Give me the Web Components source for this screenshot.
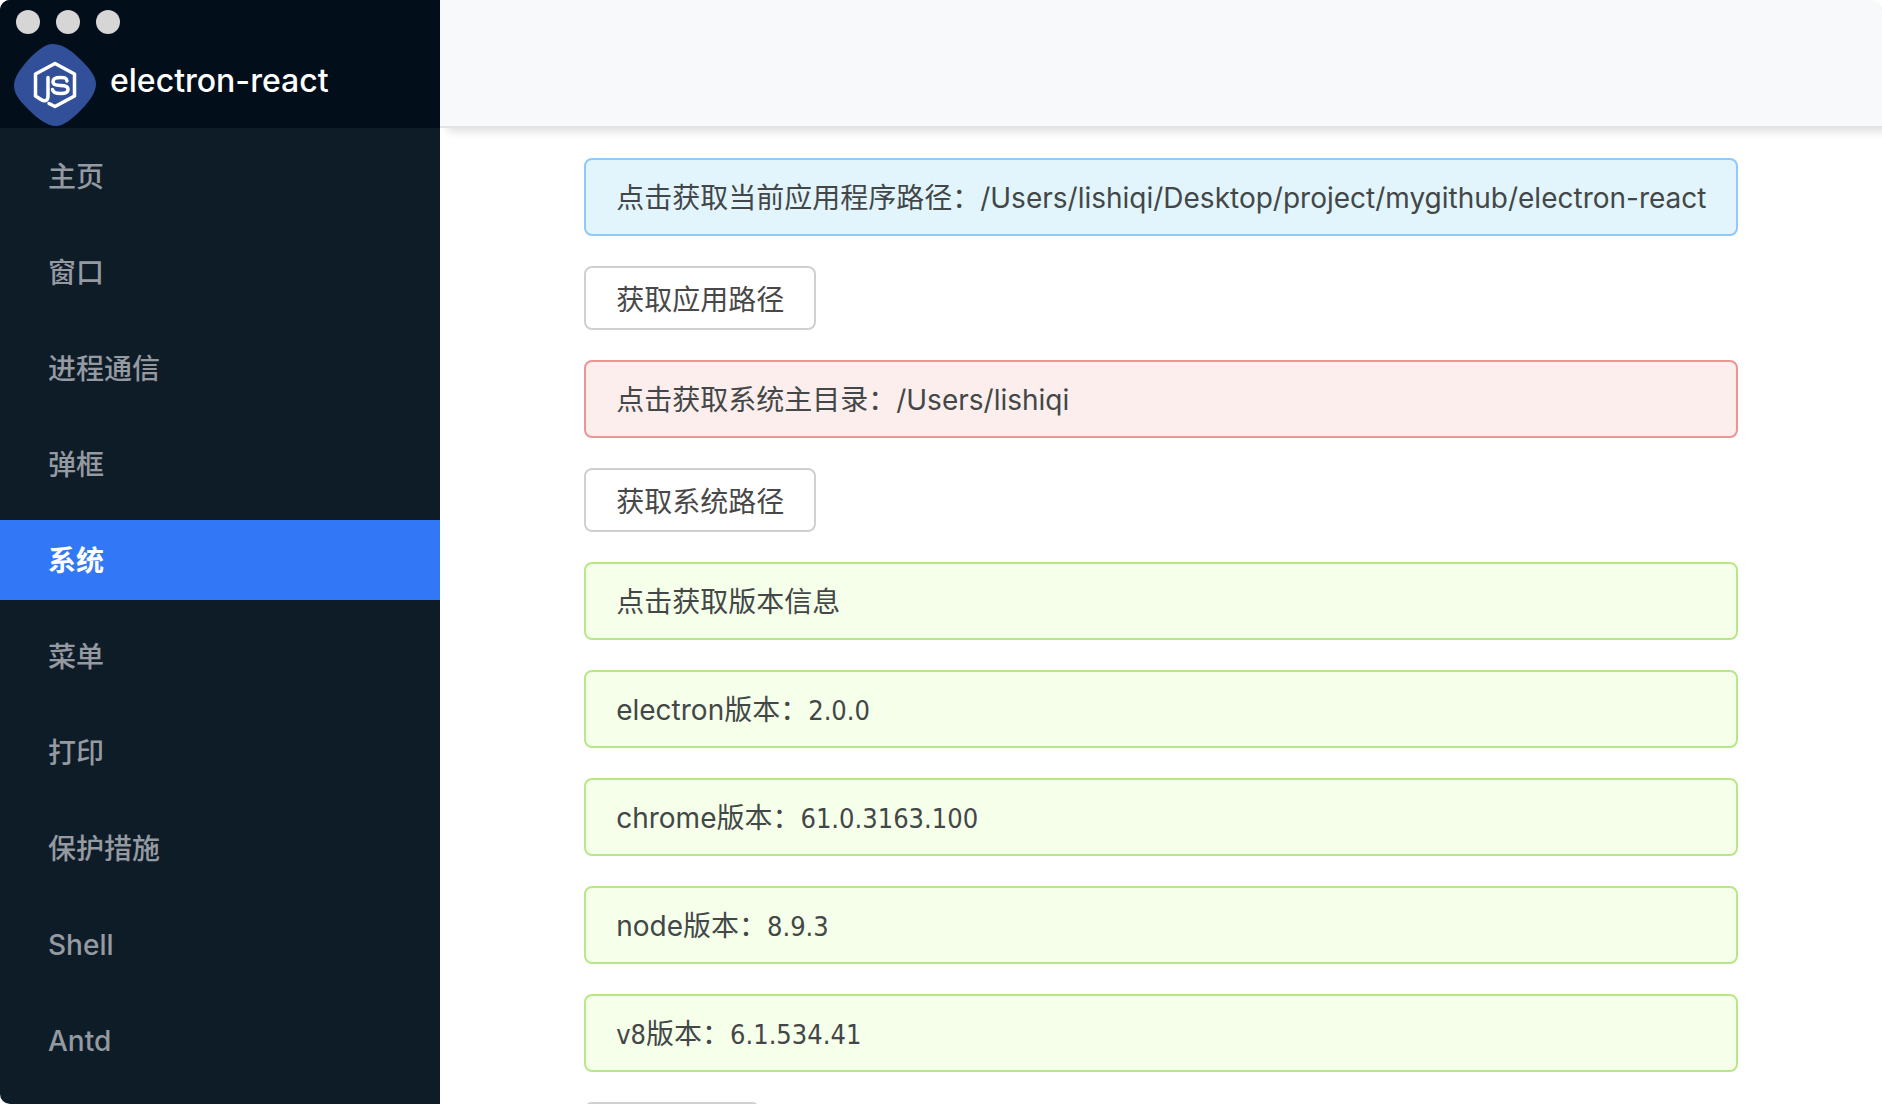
<!DOCTYPE html>
<html lang="zh-CN">
<head>
<meta charset="utf-8">
<title>electron-react</title>
<style>
html, body { height: 100%; margin: 0; }
body {
  background: #fff;
  overflow: hidden;
  font-family: Inter, "Noto Sans CJK SC", sans-serif;
  font-size: 28px;
  line-height: 42px;
  color: #434747;
}
</style>
</head>
<body>
<app-window>
  <app-brand slot="side">electron-react</app-brand>
  <side-menu slot="side">
    <menu-link href="#home">主页</menu-link>
    <menu-link href="#window">窗口</menu-link>
    <menu-link href="#ipc">进程通信</menu-link>
    <menu-link href="#dialog">弹框</menu-link>
    <menu-link href="#system" active>系统</menu-link>
    <menu-link href="#menu">菜单</menu-link>
    <menu-link href="#print">打印</menu-link>
    <menu-link href="#protect">保护措施</menu-link>
    <menu-link href="#shell">Shell</menu-link>
    <menu-link href="#antd">Antd</menu-link>
  </side-menu>
  <info-alert type="info">点击获取当前应用程序路径：/Users/lishiqi/Desktop/project/mygithub/electron-react</info-alert>
  <plain-button>获取应用路径</plain-button>
  <info-alert type="error">点击获取系统主目录：/Users/lishiqi</info-alert>
  <plain-button>获取系统路径</plain-button>
  <info-alert type="success">点击获取版本信息</info-alert>
  <info-alert type="success">electron版本：<version-number>2.0.0</version-number></info-alert>
  <info-alert type="success">chrome版本：<version-number>61.0.3163.100</version-number></info-alert>
  <info-alert type="success">node版本：<version-number>8.9.3</version-number></info-alert>
  <info-alert type="success"><version-number>v8</version-number>版本：<version-number>6.1.534.41</version-number></info-alert>
  <plain-button></plain-button>
</app-window>
<script>
class BaseElement extends HTMLElement {
  connectedCallback() {
    if (this.shadowRoot) return;
    this.attachShadow({ mode: 'open' }).innerHTML = this.render();
  }
}

customElements.define('app-window', class extends BaseElement {
  render() {
    return `<style>
      :host { display: flex; height: 100vh; overflow: hidden; border-radius: 10px; background: #fff; }
      aside { flex: none; width: 440px; background: #0e1c28; }
      .page { flex: 1; min-width: 0; display: flex; flex-direction: column; overflow: hidden; }
      header { box-sizing: border-box; flex: none; height: 128px; background: #f8f9fb;
        border-bottom: 2px solid #e2e3e5; box-shadow: 8px 4px 8px rgba(0,0,0,.12); }
      main { flex: 1; min-height: 0; overflow: hidden; padding: 30px 10% 0;
        display: flex; flex-direction: column; align-items: stretch; gap: 30px; }
    </style>
    <aside><slot name="side"></slot></aside>
    <div class="page"><header></header><main><slot></slot></main></div>`;
  }
});

customElements.define('app-brand', class extends BaseElement {
  render() {
    return `<style>
      :host { display: flex; flex-direction: column; gap: 10px; box-sizing: border-box; height: 128px;
        padding: 10px 14px 0; background: #020f1b; color: #fff; font-size: 32px; line-height: 74px; font-weight: 500; }
      .lights { display: flex; gap: 16px; padding-left: 2px; }
      .lights i { width: 24px; height: 24px; border-radius: 50%; background: #d6d6d6; }
      .row { display: flex; align-items: flex-start; gap: 14px; }
      svg { flex: none; width: 82px; height: 82px; }
    </style>
    <div class="lights"><i></i><i></i><i></i></div>
    <div class="row">
      <svg viewBox="0 0 82 82" fill="none" aria-hidden="true">
        <path fill="#32509a" d="M39 0C50 0 60 9 68 17C75 24 82 32 82 40C82 49 74 59 66 67C59 74 50 82 42 82C33 82 23 74 15 66C8 59 0 51 0 42C0 32 8 23 15 15C22 8 30 0 39 0Z"/>
        <g stroke="#fff" stroke-width="3.500" stroke-linejoin="round" stroke-linecap="round">
          <path d="M34 33.500V52C34 57.500 30 57.500 27 55.500L21.500 52V30L41 19.500L60.500 30V52L41 62.500L35 59.500"/>
          <path d="M53 37C52.500 33.500 50 33.500 46.500 33.500C42 33.500 39 34.500 39 37.500C39 41 42 41.300 46.500 41.500C51 41.700 54 42 54 45.500C54 49 51 49.500 47 49.500C42 49.500 39 49 38.500 45.500"/>
        </g>
      </svg>
      <span><slot></slot></span>
    </div>`;
  }
});

customElements.define('side-menu', class extends BaseElement {
  render() {
    return `<style>
      nav { display: flex; flex-direction: column; gap: 16px; padding: 8px 0; }
    </style><nav><slot></slot></nav>`;
  }
});

customElements.define('menu-link', class extends BaseElement {
  render() {
    return `<style>
      :host { display: block; font-weight: 500; }
      a { display: block; padding: 2px 48px 0; line-height: 78px; color: #959aa1; text-decoration: none; }
      :host([active]) a { background: #3278f6; color: #fff; font-weight: 700; }
    </style><a href="${this.getAttribute('href')}"><slot></slot></a>`;
  }
});

customElements.define('info-alert', class extends BaseElement {
  render() {
    return `<style>
      :host { flex: none; display: block; padding: 17px 30px 15px; border: 2px solid; border-radius: 8px; white-space: nowrap; }
      :host([type="info"]) { background: #e2f5fd; border-color: #90c8f9; }
      :host([type="error"]) { background: #fbeeed; border-color: #ee9593; }
      :host([type="success"]) { background: #f6ffe9; border-color: #b7e887; }
      p { margin: 0; }
    </style><p><slot></slot></p>`;
  }
});

customElements.define('version-number', class extends BaseElement {
  render() {
    return `<style>:host { font-family: "DejaVu Sans Condensed", "DejaVu Sans", sans-serif; font-size: 27px; line-height: 28px; }</style><slot></slot>`;
  }
});

customElements.define('plain-button', class extends BaseElement {
  render() {
    return `<style>
      :host { flex: none; display: block; }
      button { min-width: 176px; min-height: 64px; padding: 4px 30px 0; border: 2px solid #d0d0d0; border-radius: 8px;
        background: #fff; font: inherit; color: #484848; display: block; }
    </style><button type="button"><slot></slot></button>`;
  }
});
</script>
</body>
</html>
